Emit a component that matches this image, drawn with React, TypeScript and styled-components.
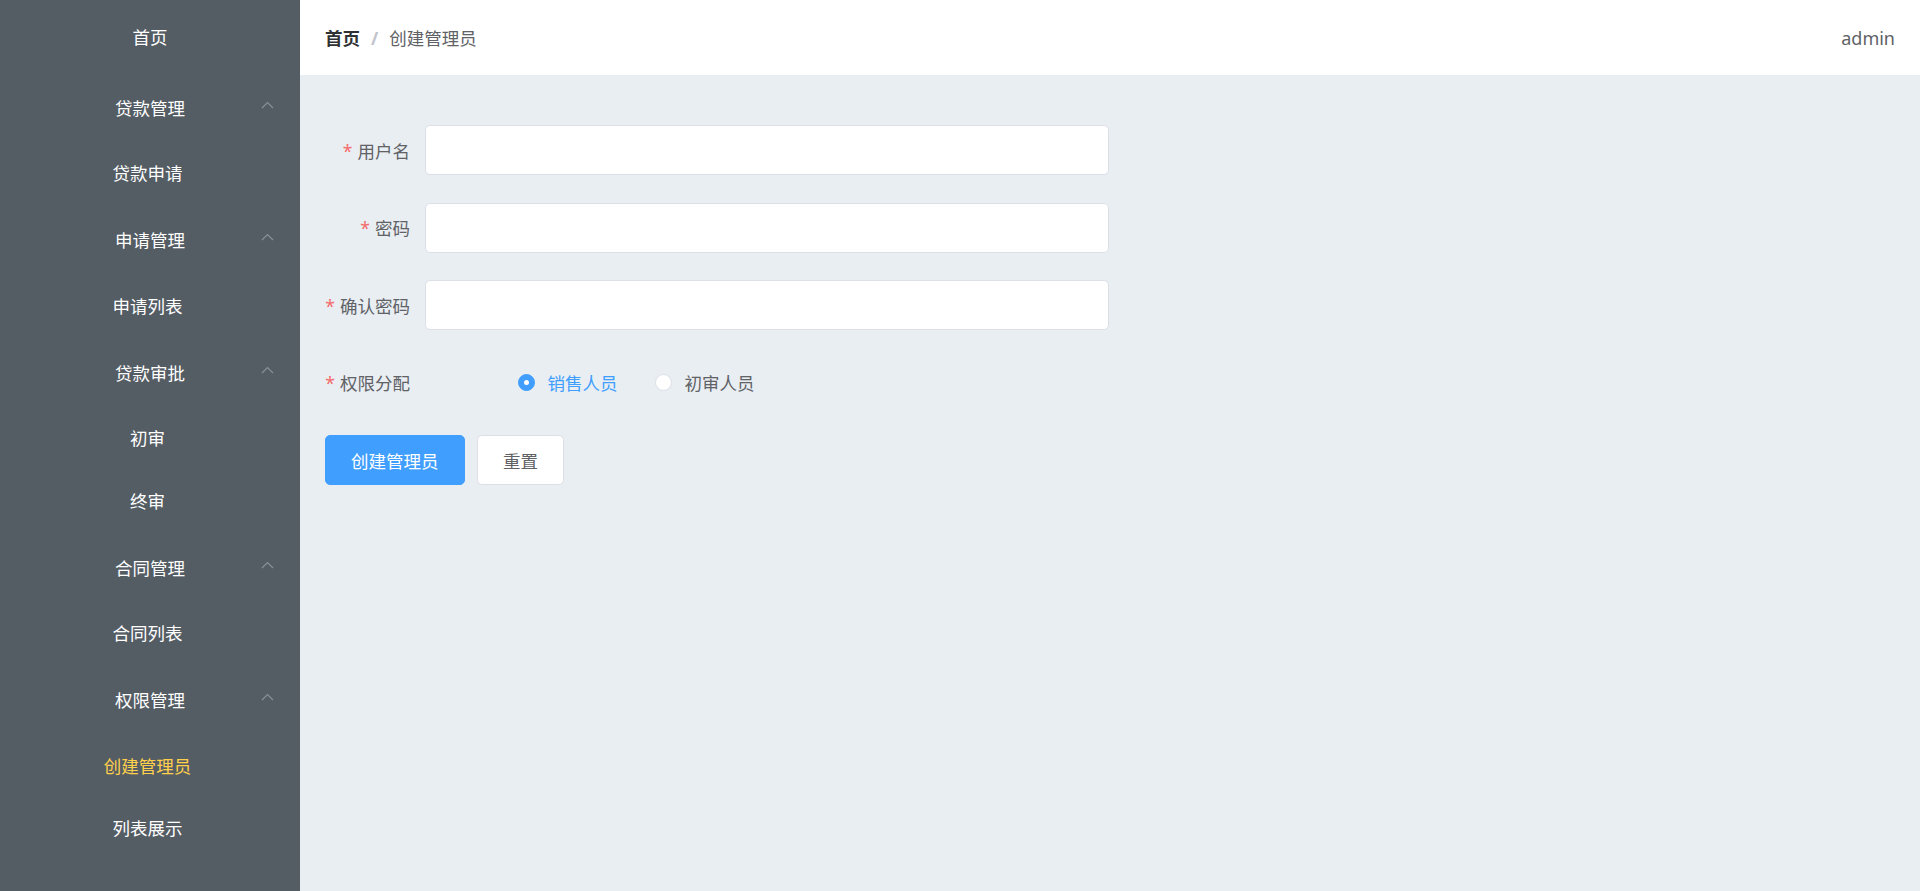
import React, { useState } from "react";
import styled, { createGlobalStyle } from "styled-components";

const GlobalStyle = createGlobalStyle`
  html, body {
    margin: 0;
    padding: 0;
    height: 100%;
  }
  body {
    font-family: "Noto Sans", "Noto Sans CJK SC", sans-serif;
    font-size: 17.5px;
  }
  #root {
    height: 100%;
  }
`;

const Layout = styled.div`
  display: flex;
  height: 100vh;
  width: 100%;
  overflow: hidden;
`;

const Sidebar = styled.aside`
  width: 300px;
  flex-shrink: 0;
  background: #545c64;
  padding-top: 2px;
  box-sizing: border-box;
`;

const MenuRow = styled.div<{ $active?: boolean }>`
  height: 70px;
  line-height: 70px;
  text-align: center;
  color: ${(p) => (p.$active ? "#ffd04b" : "#ffffff")};
  cursor: pointer;
`;

const SubTitle = styled.div`
  height: 70px;
  display: grid;
  grid-template-columns: 1fr auto 1fr;
  align-items: center;
  color: #ffffff;
  cursor: pointer;
`;

const SubTitleText = styled.span`
  grid-column: 2;
`;

const Arrow = styled.svg`
  grid-column: 3;
  justify-self: end;
  margin-right: 26px;
  margin-bottom: 5px;
`;

const SubItem = styled.div<{ $active?: boolean }>`
  height: 62.5px;
  line-height: 62.5px;
  text-align: center;
  padding-right: 5px;
  color: ${(p) => (p.$active ? "#ffd04b" : "#ffffff")};
  cursor: pointer;
`;

const Main = styled.div`
  flex: 1;
  display: flex;
  flex-direction: column;
  min-width: 0;
`;

const Header = styled.header`
  height: 75px;
  flex-shrink: 0;
  background: #ffffff;
  display: flex;
  align-items: center;
  justify-content: space-between;
  padding: 0 25px;
  box-sizing: border-box;
`;

const Breadcrumb = styled.div`
  display: flex;
  align-items: center;
`;

const CrumbHome = styled.span`
  font-weight: 700;
  color: #303133;
`;

const CrumbSep = styled.span`
  margin: 0 11px;
  color: #c0c4cc;
  font-weight: 700;
`;

const CrumbCurrent = styled.span`
  color: #606266;
`;

const UserName = styled.span`
  color: #606266;
  font-size: 18px;
`;

const Content = styled.main`
  flex: 1;
  background: #e9eef3;
  padding: 50px 25px 25px;
  box-sizing: border-box;
`;

const Form = styled.form`
  width: 784px;
`;

const FormRow = styled.div`
  display: flex;
  align-items: center;
  height: 50px;
  margin-bottom: 27.5px;
`;

const Label = styled.label`
  width: 100px;
  flex-shrink: 0;
  box-sizing: border-box;
  padding-right: 15px;
  text-align: right;
  color: #606266;
  white-space: nowrap;
`;

const Star = styled.span`
  color: #f56c6c;
  margin-right: 5px;
`;

const Input = styled.input`
  width: 684px;
  height: 50px;
  box-sizing: border-box;
  border: 1px solid #dcdfe6;
  border-radius: 5px;
  background: #ffffff;
  padding: 0 19px;
  font-family: inherit;
  font-size: 17.5px;
  color: #606266;
  outline: none;
`;

const RadioGroup = styled.div`
  display: flex;
  align-items: center;
  gap: 37.5px;
  margin-left: 93px;
`;

const RadioLabel = styled.label<{ $checked?: boolean }>`
  display: flex;
  align-items: center;
  gap: 12.5px;
  cursor: pointer;
  color: ${(p) => (p.$checked ? "#409eff" : "#606266")};
`;

const RadioDot = styled.span<{ $checked?: boolean }>`
  width: 17px;
  height: 17px;
  box-sizing: border-box;
  border-radius: 50%;
  border: 1px solid ${(p) => (p.$checked ? "#409eff" : "#dcdfe6")};
  background: ${(p) => (p.$checked ? "#409eff" : "#ffffff")};
  display: flex;
  align-items: center;
  justify-content: center;
  &::after {
    content: "";
    width: 5px;
    height: 5px;
    border-radius: 50%;
    background: #ffffff;
    display: ${(p) => (p.$checked ? "block" : "none")};
  }
`;

const Buttons = styled.div`
  display: flex;
  gap: 12.5px;
`;

const Button = styled.button<{ $primary?: boolean }>`
  height: 50px;
  padding: 0 25px;
  border-radius: 5px;
  font-family: inherit;
  font-size: 17.5px;
  cursor: pointer;
  border: 1px solid ${(p) => (p.$primary ? "#409eff" : "#dcdfe6")};
  background: ${(p) => (p.$primary ? "#409eff" : "#ffffff")};
  color: ${(p) => (p.$primary ? "#ffffff" : "#606266")};
`;

const ArrowUp = () => (
  <Arrow width="13" height="8" viewBox="0 0 13 8">
    <polyline
      points="1,7 6.5,1.5 12,7"
      fill="none"
      stroke="#8a9097"
      strokeWidth="1.2"
    />
  </Arrow>
);

const menu = [
  { title: "贷款管理", items: ["贷款申请"] },
  { title: "申请管理", items: ["申请列表"] },
  { title: "贷款审批", items: ["初审", "终审"] },
  { title: "合同管理", items: ["合同列表"] },
  { title: "权限管理", items: ["创建管理员", "列表展示"] },
];

export default function App() {
  const [role, setRole] = useState("sale");
  const active = "创建管理员";

  return (
    <>
      <GlobalStyle />
      <Layout>
        <Sidebar>
          <MenuRow>首页</MenuRow>
          {menu.map((group) => (
            <div key={group.title}>
              <SubTitle>
                <SubTitleText>{group.title}</SubTitleText>
                <ArrowUp />
              </SubTitle>
              {group.items.map((item) => (
                <SubItem key={item} $active={item === active}>
                  {item}
                </SubItem>
              ))}
            </div>
          ))}
        </Sidebar>
        <Main>
          <Header>
            <Breadcrumb>
              <CrumbHome>首页</CrumbHome>
              <CrumbSep>/</CrumbSep>
              <CrumbCurrent>创建管理员</CrumbCurrent>
            </Breadcrumb>
            <UserName>admin</UserName>
          </Header>
          <Content>
            <Form onSubmit={(e) => e.preventDefault()}>
              <FormRow>
                <Label>
                  <Star>*</Star>用户名
                </Label>
                <Input type="text" />
              </FormRow>
              <FormRow>
                <Label>
                  <Star>*</Star>密码
                </Label>
                <Input type="password" />
              </FormRow>
              <FormRow>
                <Label>
                  <Star>*</Star>确认密码
                </Label>
                <Input type="password" />
              </FormRow>
              <FormRow>
                <Label>
                  <Star>*</Star>权限分配
                </Label>
                <RadioGroup>
                  <RadioLabel
                    $checked={role === "sale"}
                    onClick={() => setRole("sale")}
                  >
                    <RadioDot $checked={role === "sale"} />
                    销售人员
                  </RadioLabel>
                  <RadioLabel
                    $checked={role === "first"}
                    onClick={() => setRole("first")}
                  >
                    <RadioDot $checked={role === "first"} />
                    初审人员
                  </RadioLabel>
                </RadioGroup>
              </FormRow>
              <Buttons>
                <Button $primary type="submit">
                  创建管理员
                </Button>
                <Button type="button">重置</Button>
              </Buttons>
            </Form>
          </Content>
        </Main>
      </Layout>
    </>
  );
}
